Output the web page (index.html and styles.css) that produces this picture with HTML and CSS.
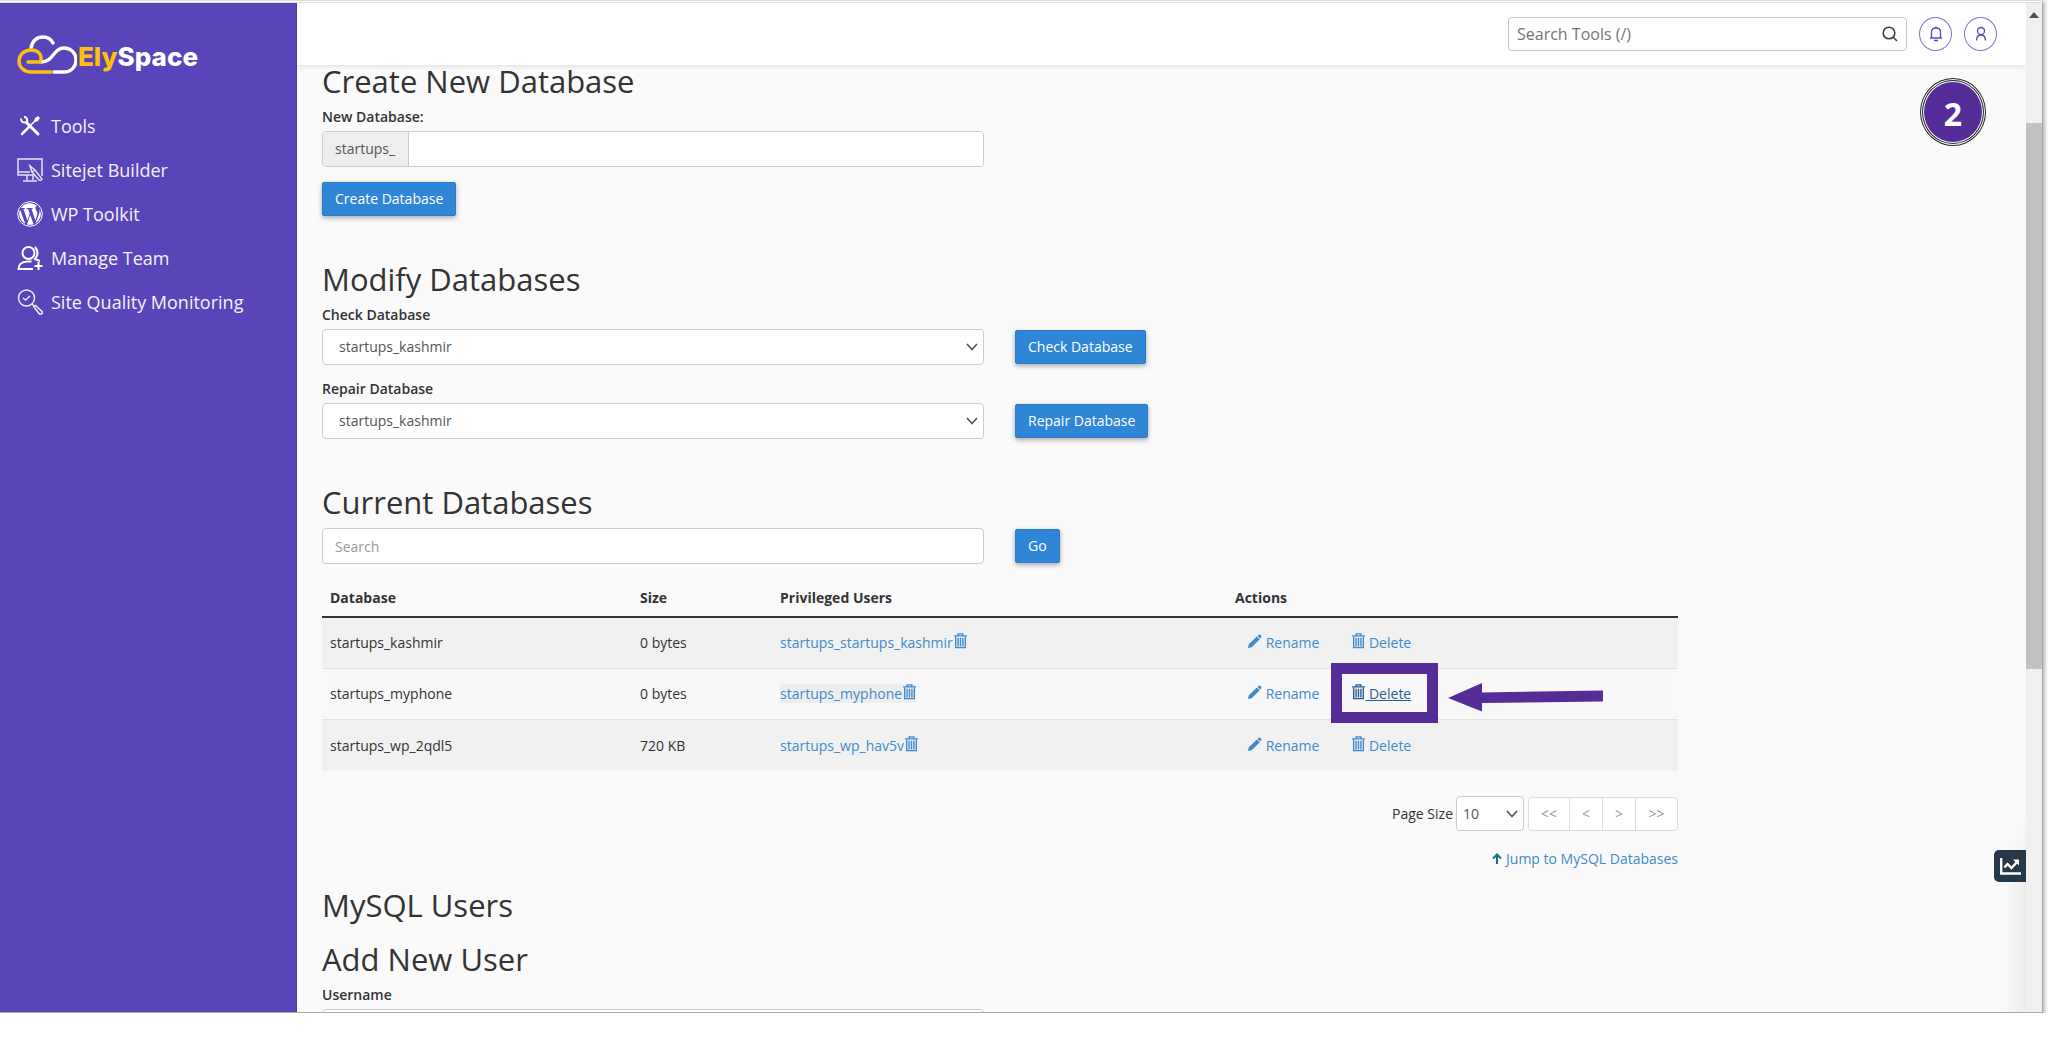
FILE: index.html
```
<!DOCTYPE html>
<html lang="en">
<head>
<meta charset="utf-8">
<meta name="viewport" content="width=device-width, initial-scale=1">
<title>MySQL Databases</title>
<link rel="stylesheet" href="styles.css">
</head>
<body>
<svg class="defs" aria-hidden="true">
  <symbol id="trash" viewBox="0 0 14 17"><path d="M4.500 2.500V.8h5v1.700M0 3h14M1.800 4v11.600h10.400V4M4.400 5v9.500M7 5v9.500M9.600 5v9.500" fill="none" stroke="currentColor" stroke-width="1.500"/></symbol>
  <symbol id="pencil" viewBox="0 0 16 16"><path d="M1 15l1-4 8.500-8.300 3 3L5 14zM11.300 2l1.200-1.200q.8-.6 1.600.1l1 1q.7.800.1 1.600L14 4.800z" fill="currentColor"/></symbol>
  <symbol id="chevron" viewBox="0 0 12 8"><path d="M1 1l5 5.500L11 1" fill="none" stroke="currentColor" stroke-width="1.600"/></symbol>
</svg>
<div class="frame">
  <aside class="sidebar">
    <a class="brand" href="#">
      <svg width="60" height="40" viewBox="0 0 60 40" fill="none" stroke-width="3.400" stroke-linecap="round"><path d="M14 13C15 6 20 2 26 2c5 0 8 2 10 6M24 27c13 0 12-14 23-14 7 0 12 5 12 12s-5 12-12 12H37" stroke="#fff"/><path d="M11 27h12c3-6-1-12-9-12C7 15 2 20 2 26s5 11 12 11h20" stroke="#fdc010"/></svg>
      <span class="brand-name"><span class="brand-ely">Ely</span>Space</span>
    </a>
    <nav class="nav">
      <a href="#"><svg viewBox="0 0 26 26"><path d="M9 9l12 12" stroke="#fff" stroke-width="3" stroke-linecap="round"/><path d="M5 21l7-7" stroke="#fff" stroke-width="2.500" stroke-linecap="round"/><path d="M14 12l4-4" stroke="#fff" stroke-width="1.500"/><path d="M17 8l1-3 3-2 2 2-2 3-3 1z" fill="#fff"/><path d="M7.500 4l1 3.500L5 9" fill="none" stroke="#5a44b9" stroke-width="2"/><path d="M4 5.500C4 9 6 10 9.500 9.500 11 7 10 4 7 3.800" fill="none" stroke="#fff" stroke-width="2"/></svg>Tools</a>
      <a href="#"><svg viewBox="0 0 26 26" fill="none" stroke="#e8e4f6" stroke-width="1.500"><path d="M16 18H1V2h24v17M1 15h12M10 18v5M16 18v5M6 24h14"/><path d="M13 9l2 6 7 8q2 1 3-1l-7-9zM15 15l3-2"/></svg>Sitejet Builder</a>
      <a href="#"><svg viewBox="0 0 26 26"><circle cx="13" cy="13" r="12.300" fill="none" stroke="#fff" stroke-width="1"/><path d="M2.200 13c0 4.300 2.500 8 6.100 9.800L3.100 8.600A10.800 10.800 0 0 0 2.200 13zM20.300 12.400c0-1.300-.5-2.300-.9-3-.5-.9-1-1.600-1-2.500 0-1 .7-1.900 1.800-1.900A10.800 10.800 0 0 0 4 7l.7.1 2.900-.2c.6 0 .6.800.1.900l-1.300.1 4 11.600 2.300-7-1.600-4.600-1.200-.1c-.5 0-.5-.9.100-.9l2.800.2 2.800-.2c.6 0 .6.800.1.900l-1.200.1 3.900 11.500 1.100-3.500c.5-1.500.8-2.500.8-3.500zM13.200 14L10 23.400a10.800 10.800 0 0 0 6.600-.2zM22.500 7.900c.4 2.800-.2 4.300-1 6.600l-3.100 7.900a10.800 10.800 0 0 0 4.100-14.500z" fill="#fff"/></svg>WP Toolkit</a>
      <a href="#"><svg viewBox="0 0 26 26" fill="none" stroke="#fff" stroke-width="2"><circle cx="11.500" cy="8" r="6"/><path d="M18 2q5 6 0 12l5 2M16 24H1.500q0-7 9-7.500h4M21.500 17v8M17.500 21h8"/></svg>Manage Team</a>
      <a href="#"><svg viewBox="0 0 26 26" fill="none" stroke="#f0edfa" stroke-width="1.500"><circle cx="9.500" cy="9" r="8"/><path d="M6 9l2.500 2L13 7M15 15l2 2M17 18l1.500-1.500 6.500 6q1 2-1 2.500h-1.500z"/></svg>Site Quality Monitoring</a>
    </nav>
  </aside>
  <div class="page">
    <header class="topbar">
      <div class="tool-search">
        <input type="text" aria-label="Search Tools" placeholder="Search Tools (/)">
        <svg width="16" height="16" viewBox="0 0 16 16" fill="none" stroke="#2f4251" stroke-width="1.600"><circle cx="7" cy="7" r="5.800"/><path d="M11 11l4 4"/></svg>
      </div>
      <button class="round" aria-label="Notifications"><svg width="14" height="16" viewBox="0 0 14 16" fill="none" stroke="#5a44b9" stroke-width="1.300"><path d="M1 12h12M2.500 12V6q0-4 4.500-4t4.500 4v6M7 .5V2M5 14.500h4"/></svg></button>
      <button class="round" aria-label="Account"><svg width="14" height="16" viewBox="0 0 14 16" fill="none" stroke="#5a44b9" stroke-width="1.300"><circle cx="7" cy="5" r="3.500"/><path d="M2.500 14.500q0-5.500 4.500-5.500t4.500 5.500"/></svg></button>
    </header>
    <main class="content">
      <h2>Create New Database</h2>
      <label for="newdb">New Database:</label>
      <div class="group"><span>startups_</span><input id="newdb" type="text"></div>
      <button class="btn create">Create Database</button>

      <h2 class="section">Modify Databases</h2>
      <label for="check">Check Database</label>
      <div class="row">
        <div class="select"><select id="check"><option>startups_kashmir</option></select><svg><use href="#chevron"/></svg></div>
        <button class="btn">Check Database</button>
      </div>
      <label class="next" for="repair">Repair Database</label>
      <div class="row">
        <div class="select"><select id="repair"><option>startups_kashmir</option></select><svg><use href="#chevron"/></svg></div>
        <button class="btn">Repair Database</button>
      </div>

      <h2 class="section">Current Databases</h2>
      <div class="row">
        <input class="field" type="text" aria-label="Search databases" placeholder="Search">
        <button class="btn">Go</button>
      </div>
      <table>
        <thead><tr><th class="c-db">Database</th><th class="c-size">Size</th><th class="c-users">Privileged Users</th><th>Actions</th></tr></thead>
        <tbody>
          <tr><td>startups_kashmir</td><td>0 bytes</td><td><a href="#">startups_startups_kashmir<svg class="trash"><use href="#trash"/></svg></a></td>
            <td><div class="actions"><a href="#"><svg class="pencil"><use href="#pencil"/></svg> Rename</a><a href="#"><svg class="trash"><use href="#trash"/></svg> Delete</a></div></td></tr>
          <tr><td>startups_myphone</td><td>0 bytes</td><td><a class="marked" href="#">startups_myphone<svg class="trash"><use href="#trash"/></svg></a></td>
            <td><div class="actions"><a href="#"><svg class="pencil"><use href="#pencil"/></svg> Rename</a><a class="hovered" href="#"><svg class="trash"><use href="#trash"/></svg><u> Delete</u><span class="callout"></span><svg class="arrow" viewBox="0 0 156 30"><path d="M0 15L34 0v9.500L155 7.500v11L34 20v8.500z" fill="#562c99"/></svg></a></div></td></tr>
          <tr><td>startups_wp_2qdl5</td><td>720 KB</td><td><a href="#">startups_wp_hav5v<svg class="trash"><use href="#trash"/></svg></a></td>
            <td><div class="actions"><a href="#"><svg class="pencil"><use href="#pencil"/></svg> Rename</a><a href="#"><svg class="trash"><use href="#trash"/></svg> Delete</a></div></td></tr>
        </tbody>
      </table>
      <div class="pager">
        <label for="size">Page Size</label>
        <div class="select small"><select id="size"><option>10</option></select><svg><use href="#chevron"/></svg></div>
        <div class="pages"><button disabled>&lt;&lt;</button><button disabled>&lt;</button><button disabled>&gt;</button><button disabled>&gt;&gt;</button></div>
      </div>
      <p class="jump"><a href="#"><svg width="10" height="11" viewBox="0 0 10 11" fill="none" stroke="#17708c" stroke-width="2"><path d="M5 11V2M1 5.500l4-4 4 4"/></svg> Jump to MySQL Databases</a></p>

      <h2 class="users">MySQL Users</h2>
      <h2 class="add">Add New User</h2>
      <label for="user">Username</label>
      <div class="group"><input id="user" type="text"></div>
    </main>
    <span class="step">2</span>
    <button class="stats" aria-label="Statistics"><svg width="21" height="17" viewBox="0 0 21 17" fill="none" stroke="#fff"><path d="M1.200 0v15.500H21" stroke-width="2.400"/><path d="M4.500 9.500l3-3.500 4 4 5-5.500" stroke-width="2.400"/><path d="M13 1.500h6v6z" fill="#fff" stroke="none"/></svg></button>
    <div class="edge"></div>
  </div>
  <div class="scroll"><svg width="10" height="6" viewBox="0 0 10 6"><path d="M5 0l5 6H0z" fill="#505050"/></svg><div class="thumb"></div></div>
</div>
</body>
</html>
```
FILE: styles.css
```
* { box-sizing: border-box; }
body { margin: 0; background: #fff; color: #333; font: 14px/20px "Open Sans", "Noto Sans", sans-serif; overflow: hidden; }
button, input, select { font: inherit; color: inherit; margin: 0; }
a { color: #4189cb; text-decoration: none; }
.defs { position: absolute; width: 0; height: 0; }

.frame { display: flex; height: calc(100vh - 35px); margin-right: 5px; border: 1px solid #a9a9a9; border-left: 0; border-top: 3px double #ddd; box-shadow: 1px 1px 5px #999; overflow: hidden; }

.sidebar { flex: 0 0 297px; background: #5a44b9; border-right: 1px solid #4d389f; padding: 32px 17px; }
.brand { display: flex; align-items: center; gap: 1px; color: #fff; }
.brand-name { font: 800 26px/32px Inter, sans-serif; padding-top: 4px; }
.brand-ely { color: #fdc010; }
.nav { display: flex; flex-direction: column; gap: 18px; margin-top: 38px; }
.nav a { display: flex; align-items: center; gap: 8px; color: #f4f2fb; font-size: 18px; line-height: 26px; white-space: nowrap; }
.nav svg { width: 26px; height: 26px; flex: none; }

.page { position: relative; flex: 1; min-width: 0; background: #fafafa; overflow: hidden; }
.topbar { display: flex; align-items: center; justify-content: flex-end; gap: 12px; height: 62px; padding: 0 29px; background: #fff; box-shadow: 0 1px 5px #ddd; position: relative; }
.tool-search { display: flex; align-items: center; width: 399px; height: 34px; padding: 0 8px; border: 1px solid #c3c3c8; border-radius: 4px; }
.tool-search input { flex: 1; min-width: 0; padding: 0; border: 0; outline: 0; font-size: 16px; background: none; }
.tool-search input::placeholder { color: #757575; opacity: 1; }
.round { display: grid; place-items: center; width: 33px; height: 34px; padding: 0; border: 1px solid #8373cb; border-radius: 50%; background: #fff; }

.content { padding: 0 24px 0 25px; }
h2 { margin: 0 0 10px; font-size: 31px; line-height: 32px; font-weight: 400; }
.content > label { display: block; font-weight: 600; margin-bottom: 4px; }
.section { margin-top: 47px; }
.content > .next { margin-top: 14px; }
.group, .field, .select { width: 662px; max-width: 100%; height: 36px; border: 1px solid #ccc; border-radius: 4px; background: #fff; }
.group { display: flex; overflow: hidden; }
.group span { padding: 7px 13px 7px 12px; background: #eee; border-right: 1px solid #ccc; color: #555; }
.group input { flex: 1; min-width: 0; border: 0; outline: 0; padding: 0 12px; }
.field { padding: 0 12px; outline: 0; }
.field::placeholder { color: #999; opacity: 1; }
.row { display: flex; align-items: center; gap: 31px; }
.select { position: relative; }
.select select { width: 100%; height: 100%; padding: 0 16px; border: 0; outline: 0; background: none; appearance: none; color: #555; }
.select svg { position: absolute; right: 5px; top: 13px; width: 12px; height: 8px; color: #555; pointer-events: none; }
.btn { height: 34px; padding: 0 12px; border: 1px solid #2a7bc8; border-radius: 2px; background: #2f86d6; color: #fff; box-shadow: 0 2px 5px #aaa; white-space: nowrap; }
.create { display: block; margin-top: 15px; }

table { width: 100%; max-width: 1356px; margin-top: 16px; border-collapse: separate; border-spacing: 0; table-layout: fixed; }
.c-db { width: 310px; }
.c-size { width: 140px; }
.c-users { width: 455px; }
th { height: 38px; padding: 0 8px; text-align: left; font-weight: 700; border-bottom: 2px solid #333; }
td { height: 51px; padding: 0 8px; border-bottom: 1px solid #e2e2e2; background: #f1f1f1; }
tr:nth-child(even) td { background: #f8f8f8; }
tr:last-child td { border-bottom: 0; }
.trash { width: 13px; height: 16px; vertical-align: -1px; margin-left: 1px; }
.pencil { width: 15px; height: 15px; vertical-align: -1px; }
.marked { background: #eee; }
.actions { display: flex; gap: 32px; padding-left: 12px; }
.hovered { position: relative; color: #2a5d8e; }
.hovered u { white-space: pre; }
.callout { position: absolute; left: -20px; top: -21px; width: 107px; height: 60px; border: 11px solid #562c99; }
.arrow { position: absolute; left: 97px; top: -1px; width: 156px; height: 30px; }

.pager { display: flex; align-items: center; justify-content: flex-end; max-width: 1356px; margin-top: 25px; }
.select.small { width: 68px; height: 35px; margin: 0 4px 0 3px; }
.small select { padding: 0 6px; }
.pages { display: flex; height: 34px; border: 1px solid #ddd; border-radius: 4px; background: #fff; overflow: hidden; }
.pages button { width: 33px; padding: 0; border: 0; border-right: 1px solid #ddd; background: none; color: #999; }
.pages button:first-child, .pages button:last-child { width: 41px; }
.pages button:last-child { border-right: 0; }
.jump { max-width: 1356px; margin: 18px 0 0; text-align: right; }
.users { margin-top: 20px; }
.add { margin-top: 22px; }

.step { position: absolute; right: 43px; top: 78px; display: grid; place-items: center; width: 60px; height: 62px; padding-top: 4px; border: 1px solid #fff; border-radius: 50%; outline: 1px solid #222; box-shadow: 0 0 0 2px #fff, 0 0 0 3px #222; background: #562c99; color: #fff; font: 700 32px/32px "Open Sans", sans-serif; }
.stats { position: absolute; z-index: 1; right: 0; bottom: 130px; display: grid; place-items: center; width: 32px; height: 32px; padding: 0; border: 0; border-radius: 5px 0 0 5px; background: #273849; }
.edge { position: absolute; right: 0; bottom: 0; width: 22px; height: 200px; background: linear-gradient(to right, #fafafa, #ececec); mask-image: linear-gradient(transparent, #000 70px); }
.scroll { flex: 0 0 16px; padding: 9px 0 343px; background: #f0f0f0; display: flex; flex-direction: column; align-items: center; }
.scroll svg { flex: none; }
.thumb { width: 100%; flex: 1; margin-top: 105px; background: #c1c1c1; }
```
